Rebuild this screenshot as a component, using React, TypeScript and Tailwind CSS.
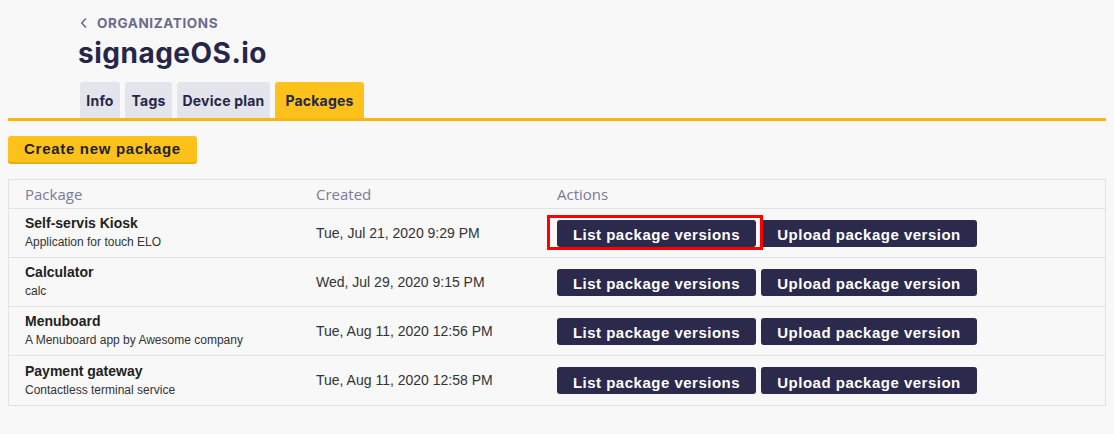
import React from 'react';

interface Pkg {
  name: string;
  description: string;
  created: string;
}

const packages: Pkg[] = [
  { name: 'Self-servis Kiosk', description: 'Application for touch ELO', created: 'Tue, Jul 21, 2020 9:29 PM' },
  { name: 'Calculator', description: 'calc', created: 'Wed, Jul 29, 2020 9:15 PM' },
  { name: 'Menuboard', description: 'A Menuboard app by Awesome company', created: 'Tue, Aug 11, 2020 12:56 PM' },
  { name: 'Payment gateway', description: 'Contactless terminal service', created: 'Tue, Aug 11, 2020 12:58 PM' },
];

const tabs = [
  { label: 'Info', width: 'w-[40px]' },
  { label: 'Tags', width: 'w-[47px]' },
  { label: 'Device plan', width: 'w-[93px]' },
  { label: 'Packages', width: 'w-[89px]' },
];

function ActionButton({ label, width }: { label: string; width: string }) {
  return (
    <button
      className={`${width} h-[27px] pt-[3px] leading-none rounded-[3px] bg-[#2b2a4c] text-white text-[15px] font-bold tracking-[0.5px] font-['Liberation_Sans',Arial,sans-serif]`}
    >
      {label}
    </button>
  );
}

export default function App() {
  return (
    <div className="min-h-[434px] bg-[#f8f8f8] pt-[13px] pb-8">
      <div className="pl-[78px]">
        <div className="flex items-center gap-[9px] text-[#6c6b8c] font-['Inter',sans-serif]">
          <svg width="8" height="12" viewBox="0 0 8 12" className="ml-[2px]">
            <path d="M6 1.5 L1.8 6 L6 10.5" fill="none" stroke="currentColor" strokeWidth="1.6" />
          </svg>
          <span className="text-[13.5px] font-bold tracking-[0.6px]">ORGANIZATIONS</span>
        </div>
        <h1 className="mt-[2px] text-[28px] leading-[36px] font-bold text-[#26264a] font-['Inter',sans-serif] tracking-[0.5px]">
          signageOS.io
        </h1>
      </div>

      <div className="mx-2 mt-[11px] border-b-[3px] border-[#f6b80f]">
        <div className="flex gap-[5px] pl-[72px]">
          {tabs.map((t) => (
            <div
              key={t.label}
              className={`${t.width} h-[36px] flex items-center justify-center rounded-t-[3px] text-[14px] font-bold tracking-[0.2px] font-['Inter',sans-serif] text-[#26264a] ${
                t.label === 'Packages' ? 'bg-[#fcc21b]' : 'bg-[#e4e4ec]'
              }`}
            >
              {t.label}
            </div>
          ))}
        </div>
      </div>

      <div className="px-2 mt-[15px] flex">
        <button className="h-[28px] w-[189px] rounded-[3px] bg-[#fcc21b] border-b-2 border-[#e9ad0c] text-[15px] font-bold text-[#1f1f2e] font-['Liberation_Sans',Arial,sans-serif] tracking-[0.7px]">
          Create new package
        </button>
      </div>

      <div className="mx-2 mt-[15px] border border-[#e2e2e2]">
        <div className="grid grid-cols-[291px_241px_1fr] h-[29px] items-center border-b border-[#e2e2e2] text-[15px] text-[#7b7a9c] font-['Open_Sans',sans-serif]">
          <div className="pl-4">Package</div>
          <div className="pl-4">Created</div>
          <div className="pl-4">Actions</div>
        </div>
        {packages.map((p, i) => (
          <div
            key={p.name}
            className={`grid grid-cols-[291px_241px_1fr] h-[49px] items-center font-['Liberation_Sans',Arial,sans-serif] ${
              i < packages.length - 1 ? 'border-b border-[#e2e2e2]' : ''
            }`}
          >
            <div className="pl-4 pb-[2px]">
              <div className="text-[14px] font-bold text-[#222] leading-[18px]">{p.name}</div>
              <div className="text-[12px] text-[#333] leading-[15px] mt-[3px]">{p.description}</div>
            </div>
            <div className="pl-4 text-[14px] text-[#333]">{p.created}</div>
            <div className="pl-4 flex gap-[5px] relative">
              <ActionButton label="List package versions" width="w-[199px]" />
              <ActionButton label="Upload package version" width="w-[216px]" />
              {i === 0 && (
                <div className="absolute left-[6px] top-[-5px] w-[216px] h-[35px] border-[3px] border-[#ff0000]" />
              )}
            </div>
          </div>
        ))}
      </div>
    </div>
  );
}
